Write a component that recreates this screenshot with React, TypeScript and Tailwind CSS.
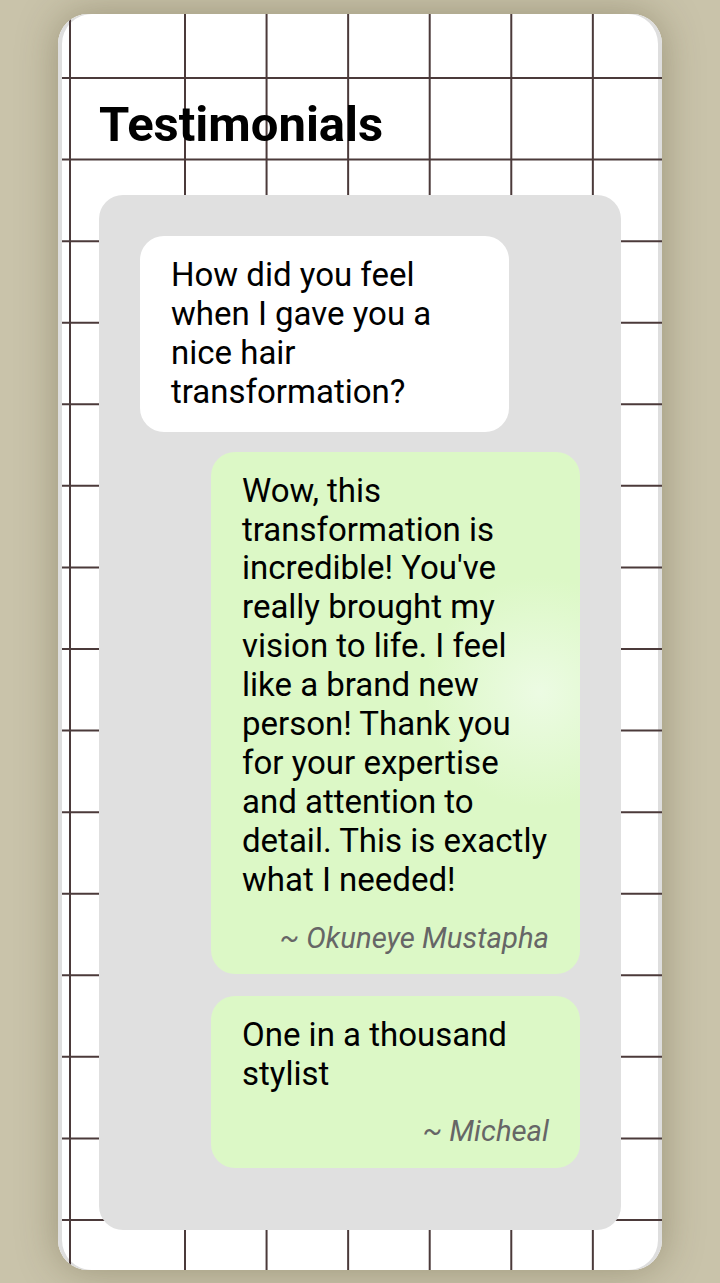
const testimonials = [
  {
    text: "Wow, this transformation is incredible! You've really brought my vision to life. I feel like a brand new person! Thank you for your expertise and attention to detail. This is exactly what I needed!",
    author: 'Okuneye Mustapha',
    glow: true,
  },
  {
    text: 'One in a thousand stylist',
    author: 'Micheal',
    glow: false,
  },
];

const STEP = 81.57;

const GridLines = () => {
  const vertical = [12, 127, 127 + STEP, 127 + STEP * 2, 127 + STEP * 3, 127 + STEP * 4, 127 + STEP * 5];
  const horizontal = Array.from({ length: 15 }, (_, i) => 64 + STEP * i);
  return (
    <svg className="absolute inset-0 h-full w-full" viewBox="0 0 604 1256" preserveAspectRatio="none">
      {horizontal.map((y, i) => (
        <line key={'h' + i} x1={4} x2={604} y1={y} y2={y} stroke="#4b3a3a" strokeWidth={2} />
      ))}
      {vertical.map((x, i) => (
        <line key={'v' + i} x1={x} x2={x} y1={0} y2={1256} stroke="#4b3a3a" strokeWidth={2} />
      ))}
    </svg>
  );
};

const App = () => {
  return (
    <div className="min-h-screen bg-[#c9c3aa] px-[58px] pt-[14px] pb-[13px] font-['Roboto','Liberation_Sans',sans-serif]">
      <div className="relative h-[1256px] overflow-hidden rounded-[30px] bg-white shadow-[inset_4px_0_0_#dedede,inset_-4px_0_0_#dedede,0_0_40px_rgba(70,60,30,0.35)]">
        <GridLines />
        <div className="relative px-[41px] pt-[84px]">
          <h1 className="text-[49px] leading-[54px] font-bold text-black">Testimonials</h1>
          <div className="mt-[43px] rounded-[24px] bg-[#e0e0e0] p-[41px]">
            <div className="mb-[20px] w-[369px] rounded-[24px] bg-white px-[31px] py-[20px] text-[33px] leading-[38.9px] text-black">
              How did you feel when I gave you a nice hair transformation?
            </div>
            {testimonials.map((t, i) => (
              <div
                key={i}
                className={
                  'ml-auto w-[369px] rounded-[24px] px-[31px] pt-[20px] ' +
                  (t.glow
                    ? 'mb-[22px] pb-[19px] bg-[radial-gradient(circle_at_89%_46%,#ecfbe3_0px,#dcf8c6_115px)]'
                    : 'mb-[21px] pb-[20px] bg-[#dcf8c6]')
                }
              >
                <p className="text-[33px] leading-[38.9px] text-black">{t.text}</p>
                <p className="mt-[21px] text-right text-[29.3px] leading-[34px] text-[#666] italic">~ {t.author}</p>
              </div>
            ))}
          </div>
        </div>
      </div>
    </div>
  );
};

export default App;
